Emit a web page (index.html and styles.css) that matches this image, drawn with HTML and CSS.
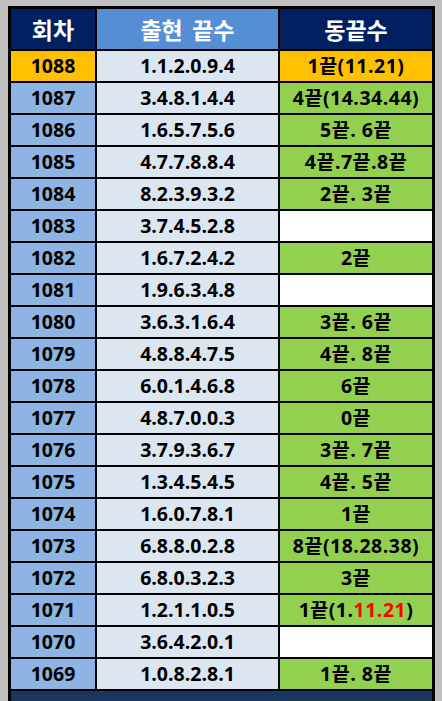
FILE: index.html
```html
<!DOCTYPE html>
<html lang="ko">
<head>
<meta charset="utf-8">
<link rel="stylesheet" href="styles.css">
</head>
<body>
<div class="sheet">
  <div class="h h-dark">회차</div><div class="h h-blue">출현 끝수</div><div class="h h-dark">동끝수</div>

  <div class="c no hl">1088</div><div class="c nums">1.1.2.0.9.4</div><div class="c same hl">1끝(11.21)</div>
  <div class="c no">1087</div><div class="c nums">3.4.8.1.4.4</div><div class="c same g">4끝(14.34.44)</div>
  <div class="c no">1086</div><div class="c nums">1.6.5.7.5.6</div><div class="c same g">5끝. 6끝</div>
  <div class="c no">1085</div><div class="c nums">4.7.7.8.8.4</div><div class="c same g">4끝.7끝.8끝</div>
  <div class="c no">1084</div><div class="c nums">8.2.3.9.3.2</div><div class="c same g">2끝. 3끝</div>
  <div class="c no">1083</div><div class="c nums">3.7.4.5.2.8</div><div class="c same w"></div>
  <div class="c no">1082</div><div class="c nums">1.6.7.2.4.2</div><div class="c same g">2끝</div>
  <div class="c no">1081</div><div class="c nums">1.9.6.3.4.8</div><div class="c same w"></div>
  <div class="c no">1080</div><div class="c nums">3.6.3.1.6.4</div><div class="c same g">3끝. 6끝</div>
  <div class="c no">1079</div><div class="c nums">4.8.8.4.7.5</div><div class="c same g">4끝. 8끝</div>
  <div class="c no">1078</div><div class="c nums">6.0.1.4.6.8</div><div class="c same g">6끝</div>
  <div class="c no">1077</div><div class="c nums">4.8.7.0.0.3</div><div class="c same g">0끝</div>
  <div class="c no">1076</div><div class="c nums">3.7.9.3.6.7</div><div class="c same g">3끝. 7끝</div>
  <div class="c no">1075</div><div class="c nums">1.3.4.5.4.5</div><div class="c same g">4끝. 5끝</div>
  <div class="c no">1074</div><div class="c nums">1.6.0.7.8.1</div><div class="c same g">1끝</div>
  <div class="c no">1073</div><div class="c nums">6.8.8.0.2.8</div><div class="c same g">8끝(18.28.38)</div>
  <div class="c no">1072</div><div class="c nums">6.8.0.3.2.3</div><div class="c same g">3끝</div>
  <div class="c no">1071</div><div class="c nums">1.2.1.1.0.5</div><div class="c same g">1끝(1.<span class="red">11.21</span>)</div>
  <div class="c no">1070</div><div class="c nums">3.6.4.2.0.1</div><div class="c same w"></div>
  <div class="c no">1069</div><div class="c nums">1.0.8.2.8.1</div><div class="c same g">1끝. 8끝</div>

  <div class="foot"></div>
</div>
</body>
</html>
```

FILE: styles.css
```css
html, body {
  margin: 0;
  padding: 0;
  background: #c0c0c0;
  height: 100%;
  overflow: hidden;
}
body {
  font-family: "Open Sans", "Noto Sans CJK KR", sans-serif;
  font-weight: 700;
}
.sheet {
  margin: 6px 0 0 8px;
  width: 427px;
  box-sizing: border-box;
  border: 3px solid #000;
  background: #000;
  display: grid;
  grid-template-columns: 84px 181px 152px;
  grid-auto-rows: 30px;
  grid-template-rows: 40px;
  gap: 2px;
}
.h {
  display: flex;
  align-items: center;
  justify-content: center;
  color: #fff;
  font-family: "Noto Sans CJK KR", sans-serif;
  font-size: 23px;
  line-height: 1;
  word-spacing: 3px;
}
.h-dark { background: #002060; }
.h-blue { background: #558ed5; }
.c {
  display: flex;
  align-items: center;
  justify-content: center;
  color: #000;
  font-size: 19.5px;
  line-height: 1;
  white-space: pre;
}
.same { letter-spacing: 0.5px; }
.no { background: #8db4e2; }
.nums { background: #dce6f1; }
.g { background: #92d050; }
.w { background: #fff; }
.hl { background: #ffc000; }
.red { color: #ff0000; }
.foot {
  grid-column: 1 / -1;
  height: 40px;
  background: #1b365d;
}
```
